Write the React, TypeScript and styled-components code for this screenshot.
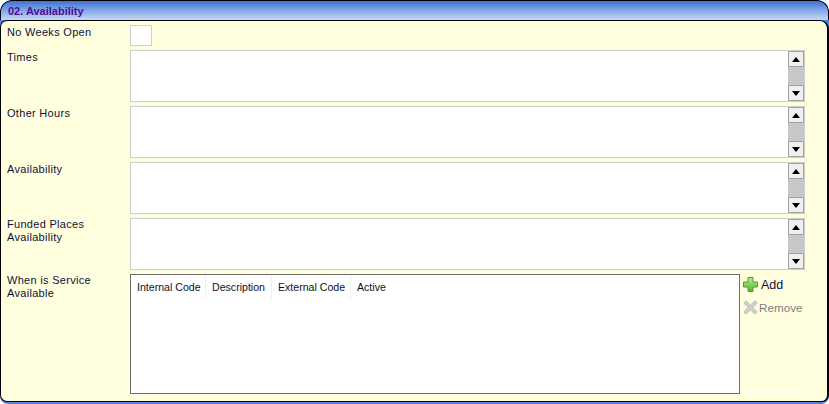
import React from 'react';
import styled, { createGlobalStyle } from 'styled-components';

const GlobalStyle = createGlobalStyle`
  html, body {
    margin: 0;
    padding: 0;
    background: #ffffff;
  }
  body {
    width: 829px;
    height: 404px;
    overflow: hidden;
    font-family: "Liberation Sans", Arial, sans-serif;
  }
`;

const Panel = styled.section`
  width: 829px;
  height: 404px;
  box-sizing: border-box;
  background: #4f82dc;
  border-radius: 12px 12px 8px 8px;
  overflow: hidden;
  position: relative;
  display: flex;
  flex-direction: column;
`;

const TitleBar = styled.header`
  height: 20px;
  flex: none;
  box-sizing: border-box;
  padding: 3px 0 0 7px;
  background: linear-gradient(180deg, #3f72d6 0%, #7ea3e6 45%, #c6d8f5 100%);
  border-top: 1px solid #000;
  border-left: 1px solid #000;
  border-right: 1px solid #000;
  border-radius: 12px 12px 0 0;
  color: #4b0f91;
  font-size: 11px;
  line-height: 14px;
  font-weight: bold;
`;

const Body = styled.div`
  flex: none;
  height: 382px;
  box-sizing: border-box;
  background: #ffffe0;
  border: 1px solid #000;
  border-width: 1px 2px 1px 1px;
  border-radius: 7px 9px 7px 7px;
  padding: 4px 22px 0 6px;
  display: flex;
  flex-direction: column;
  gap: 4px;
`;

const Row = styled.div`
  display: flex;
  align-items: flex-start;
`;

const Label = styled.label`
  width: 123px;
  flex: none;
  padding-top: ${p => (p.$tight ? '0' : '1px')};
  font-size: 11px;
  line-height: 13px;
  letter-spacing: 0.3px;
  color: #10103a;
`;

const NumberBox = styled.input`
  width: 22px;
  height: 21px;
  box-sizing: border-box;
  border: 1px solid #cfcfcf;
  background: #fff;
  padding: 0;
  margin: 0;
  display: block;
`;

const MemoBox = styled.div`
  width: 676px;
  height: 52px;
  box-sizing: border-box;
  border: 1px solid #cfcfcf;
  background: #fff;
  display: flex;
  justify-content: flex-end;
`;

const ScrollTrack = styled.div`
  width: 16px;
  background: #c8c8c8;
  display: flex;
  flex-direction: column;
  justify-content: space-between;
`;

const ScrollButton = styled.div`
  width: 16px;
  height: 16px;
  box-sizing: border-box;
  background: #f0f0f0;
  border: 1px solid #a0a0a0;
  display: flex;
  align-items: center;
  justify-content: center;
`;

const ListBox = styled.div`
  width: 610px;
  height: 120px;
  box-sizing: border-box;
  border: 1px solid #6e6e6e;
  background: #fff;
  flex: none;
`;

const HeaderRow = styled.div`
  display: flex;
  height: 24px;
`;

const HeaderCell = styled.div`
  box-sizing: border-box;
  flex: none;
  width: ${p => p.$w}px;
  padding: 5px 0 0 6px;
  font-size: 10.6px;
  line-height: 14px;
  white-space: nowrap;
  color: #10101a;
  border-right: 1px solid ${p => (p.$last ? 'transparent' : '#efefef')};
`;

const Actions = styled.div`
  flex: none;
  width: 66px;
  height: 119px;
  box-sizing: border-box;
  border-bottom: 1px solid #fafaf0;
  display: flex;
  flex-direction: column;
  gap: 6px;
  padding: 2px 0 0 3px;
`;

const ActionButton = styled.div`
  display: flex;
  align-items: center;
  gap: ${p => (p.$disabled ? '1px' : '3px')};
  height: 17px;
  white-space: nowrap;
  font-size: ${p => (p.$disabled ? '11.7px' : '12.5px')};
  color: ${p => (p.$disabled ? '#7d7d8a' : '#10103a')};
`;

const UpArrow = () => (
  <svg width="8" height="5" viewBox="0 0 8 5"><path d="M4 0 8 5H0Z" fill="#000" /></svg>
);

const DownArrow = () => (
  <svg width="8" height="5" viewBox="0 0 8 5"><path d="M0 0H8L4 5Z" fill="#000" /></svg>
);

const PlusIcon = () => (
  <svg width="15" height="15" viewBox="0 0 15 15">
    <defs>
      <linearGradient id="plusFill" x1="0" y1="0" x2="0" y2="1">
        <stop offset="0" stopColor="#b6ee8e" />
        <stop offset="1" stopColor="#55b82e" />
      </linearGradient>
    </defs>
    <path d="M5 .5H10V5H14.5V10H10V14.5H5V10H.5V5H5Z" fill="url(#plusFill)" stroke="#4f9a35" />
  </svg>
);

const RemoveIcon = () => (
  <svg width="15" height="15" viewBox="0 0 15 15">
    <path d="M3 .8 7.5 5 12 .8 14.2 3 10 7.5 14.2 12 12 14.2 7.5 10 3 14.2.8 12 5 7.5.8 3Z" fill="#cfcfcf" stroke="#b4b4b4" strokeWidth=".8" />
  </svg>
);

const Memo = () => (
  <MemoBox>
    <ScrollTrack>
      <ScrollButton><UpArrow /></ScrollButton>
      <ScrollButton><DownArrow /></ScrollButton>
    </ScrollTrack>
  </MemoBox>
);

const columns = [
  { title: 'Internal Code', w: 75 },
  { title: 'Description', w: 66 },
  { title: 'External Code', w: 79 },
  { title: 'Active', w: 60, last: true },
];

export default function App() {
  return (
    <>
      <GlobalStyle />
      <Panel>
        <TitleBar>02. Availability</TitleBar>
        <Body>
          <Row>
            <Label>No Weeks Open</Label>
            <NumberBox />
          </Row>
          <Row>
            <Label>Times</Label>
            <Memo />
          </Row>
          <Row>
            <Label>Other Hours</Label>
            <Memo />
          </Row>
          <Row>
            <Label>Availability</Label>
            <Memo />
          </Row>
          <Row>
            <Label $tight>Funded Places Availability</Label>
            <Memo />
          </Row>
          <Row>
            <Label $tight>When is Service Available</Label>
            <ListBox>
              <HeaderRow>
                {columns.map(c => (
                  <HeaderCell key={c.title} $w={c.w} $last={c.last}>{c.title}</HeaderCell>
                ))}
              </HeaderRow>
            </ListBox>
            <Actions>
              <ActionButton><PlusIcon />Add</ActionButton>
              <ActionButton $disabled><RemoveIcon />Remove</ActionButton>
            </Actions>
          </Row>
        </Body>
      </Panel>
    </>
  );
}
